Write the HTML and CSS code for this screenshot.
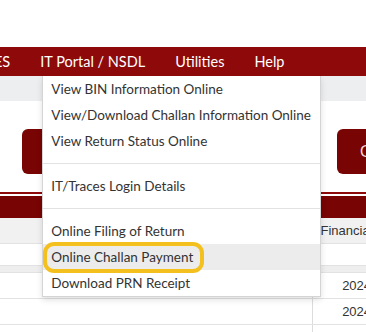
FILE: index.html
```html
<!DOCTYPE html>
<html lang="en">
<head>
  <meta charset="UTF-8">
  <title>IT Portal / NSDL</title>
  <link rel="stylesheet" href="styles.css">
</head>
<body>
  <div class="topband"></div>

  <nav class="mainnav">
    <ul class="navlist">
      <li class="navitem navitem-cut">ES</li>
      <li class="navitem has-menu">IT Portal / NSDL
        <ul class="dropdown">
          <li class="dd-item">View BIN Information Online</li>
          <li class="dd-item">View/Download Challan Information Online</li>
          <li class="dd-item">View Return Status Online</li>
          <li class="dd-divider"></li>
          <li class="dd-item">IT/Traces Login Details</li>
          <li class="dd-divider"></li>
          <li class="dd-item">Online Filing of Return</li>
          <li class="dd-item dd-active">
            <span class="dd-label">Online Challan Payment<span class="mark"></span></span>
          </li>
          <li class="dd-item">Download PRN Receipt</li>
        </ul>
      </li>
      <li class="navitem">Utilities</li>
      <li class="navitem">Help</li>
    </ul>
  </nav>

  <div class="subbar"></div>

  <div class="tiles">
    <div class="tile tile-left"></div>
    <div class="tile tile-right">Online</div>
  </div>

  <div class="panel">
    <div class="panel-head"></div>
    <table class="grid">
      <colgroup>
        <col class="col-main">
        <col class="col-year">
        <col class="col-rest">
      </colgroup>
      <tr class="row-head">
        <th></th>
        <th>Financial Year</th>
        <th>Quarter</th>
      </tr>
      <tr class="row-filter"><td></td><td></td><td></td></tr>
      <tr class="row-gap"><td></td><td></td><td></td></tr>
      <tr class="row-data"><td></td><td class="td-year">2024-25</td><td>Q1</td></tr>
      <tr class="row-data"><td></td><td class="td-year">2024-25</td><td>Q2</td></tr>
      <tr class="row-data"><td></td><td class="td-year">2024-25</td><td>Q3</td></tr>
    </table>
  </div>
</body>
</html>
```

FILE: styles.css
```css
body {
  margin: 0;
  width: 366px;
  height: 332px;
  overflow: hidden;
  font-family: Lato, "Noto Sans", sans-serif;
  background: #fff;
}

.topband {
  height: 47px;
  background: #fff;
}

/* top menu */
.mainnav {
  height: 29px;
  background: #8e0a0a;
  position: relative;
  z-index: 5;
}
.navlist {
  list-style: none;
  margin: 0 0 0 -21px;
  padding: 0;
  display: flex;
  height: 29px;
}
.navitem {
  color: #fff;
  font-size: 14.5px;
  line-height: 29px;
  padding: 0 15px;
  white-space: nowrap;
}
.has-menu {
  position: relative;
}

/* dropdown */
.dropdown {
  position: absolute;
  top: 100%;
  left: 17px;
  width: 277px;
  margin: 0;
  padding: 0;
  list-style: none;
  background: #fff;
  border: 1px solid #d4d4d4;
  border-top: none;
  box-shadow: 0 3px 6px rgba(0, 0, 0, 0.12);
}
.dd-item {
  height: 26px;
  line-height: 26px;
  padding: 0 8px;
  font-size: 13.5px;
  color: #333;
  white-space: nowrap;
}
.dd-active {
  background: #ececec;
}
.dd-label {
  position: relative;
}
.dd-divider {
  height: 1px;
  margin: 9px 0;
  background: #e2e2e2;
}
.mark {
  position: absolute;
  left: -8px;
  right: -11px;
  top: -7px;
  bottom: -8px;
  border: 4px solid #f4c01e;
  border-radius: 11px;
}

.subbar {
  height: 25px;
  background: #edeef0;
}

/* tiles */
.tiles {
  display: flex;
  width: 600px;
  padding: 28px 0 0 22px;
  gap: 115px;
}
.tile {
  height: 45px;
  border-radius: 6px;
  background: #780404;
  color: #f3d6d6;
  font-family: "Liberation Sans", Arial, sans-serif;
  font-size: 16px;
  line-height: 45px;
  box-sizing: border-box;
}
.tile-left {
  width: 200px;
}
.tile-right {
  width: 150px;
  padding-left: 23px;
}

/* table panel */
.panel {
  margin-top: 18px;
  border-top: 2px solid #8e0a0a;
}
.panel-head {
  margin-top: 2px;
  height: 22px;
  background: #780404;
}
.grid {
  border-collapse: collapse;
  table-layout: fixed;
  width: 520px;
  font-family: "Liberation Sans", Arial, sans-serif;
  font-size: 13px;
  color: #333;
}
.col-main {
  width: 312px;
}
.col-year {
  width: 108px;
}
.col-rest {
  width: 100px;
}
.grid th,
.grid td {
  padding: 0 8px;
  border-bottom: 1px solid #e2e2e2;
  white-space: nowrap;
  overflow: hidden;
}
.grid td + td,
.grid th + th {
  border-left: 1px solid #dcdcdc;
}
.row-head th {
  height: 25px;
  background: #f1f1f1;
  text-align: left;
  font-weight: normal;
}
.row-filter td {
  height: 21px;
}
.row-gap td {
  height: 6px;
  background: #eeeeee;
}
.row-data td {
  height: 25px;
}
.td-year {
  text-align: center;
}
```
